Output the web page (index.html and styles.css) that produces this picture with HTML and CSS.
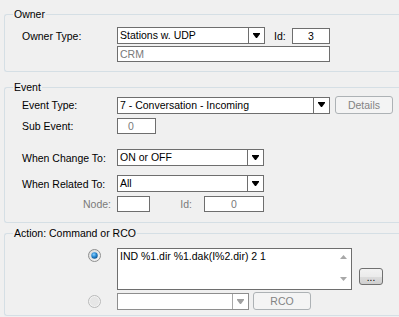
FILE: index.html
```html
<!DOCTYPE html>
<html>
<head>
<meta charset="utf-8">
<link rel="stylesheet" href="styles.css">
</head>
<body>
<fieldset class="group owner">
  <legend>Owner</legend>
  <div class="row owner-r1">
    <span class="lbl">Owner Type:</span>
    <div class="combo w148"><span class="val">Stations w. UDP</span><span class="arrow"><svg width="7" height="6" viewBox="0 0 7 6"><polygon points="0,0 7,0 7,1 4,5 3,5 0,1" fill="#000"/></svg></span></div>
    <span class="idlbl">Id:</span>
    <div class="edit w38 center">3</div>
  </div>
  <div class="row owner-r2">
    <span class="lbl"></span>
    <div class="edit w213 gray">CRM</div>
  </div>
</fieldset>

<fieldset class="group event">
  <legend>Event</legend>
  <div class="row ev-r1">
    <span class="lbl">Event Type:</span>
    <div class="combo w213"><span class="val">7 - Conversation - Incoming</span><span class="arrow"><svg width="7" height="6" viewBox="0 0 7 6"><polygon points="0,0 7,0 7,1 4,5 3,5 0,1" fill="#000"/></svg></span></div>
    <div class="btn dis details">Details</div>
  </div>
  <div class="row ev-r2">
    <span class="lbl">Sub Event:</span>
    <div class="edit w39 gray sub">0</div>
  </div>
  <div class="row ev-r3">
    <span class="lbl">When Change To:</span>
    <div class="combo w147"><span class="val">ON or OFF</span><span class="arrow"><svg width="7" height="6" viewBox="0 0 7 6"><polygon points="0,0 7,0 7,1 4,5 3,5 0,1" fill="#000"/></svg></span></div>
  </div>
  <div class="row ev-r4">
    <span class="lbl">When Related To:</span>
    <div class="combo w147"><span class="val">All</span><span class="arrow"><svg width="7" height="6" viewBox="0 0 7 6"><polygon points="0,0 7,0 7,1 4,5 3,5 0,1" fill="#000"/></svg></span></div>
  </div>
  <div class="row ev-r5">
    <span class="lbl right gray">Node:</span>
    <div class="edit w33"></div>
    <span class="idlbl2 gray">Id:</span>
    <div class="edit w60 center gray">0</div>
  </div>
</fieldset>

<fieldset class="group action">
  <legend>Action: Command or RCO</legend>
  <div class="row act-r1">
    <span class="radiocell top">
      <svg width="13" height="13" viewBox="0 0 13 13">
        <defs>
          <radialGradient id="dot" cx="0.4" cy="0.35" r="0.7">
            <stop offset="0" stop-color="#8fd3ff"/>
            <stop offset="0.5" stop-color="#2a8ad4"/>
            <stop offset="1" stop-color="#0d4f8a"/>
          </radialGradient>
          <linearGradient id="ring" x1="0" y1="0" x2="1" y2="1">
            <stop offset="0" stop-color="#d8d8d8"/>
            <stop offset="1" stop-color="#f8f8f8"/>
          </linearGradient>
        </defs>
        <circle cx="6.5" cy="6.5" r="6" fill="url(#ring)" stroke="#8e8f8f" stroke-width="1"/>
        <circle cx="6.5" cy="6.5" r="3.2" fill="url(#dot)"/>
      </svg>
    </span>
    <div class="memo">
      <div class="memotext">IND %1.dir %1.dak(I%2.dir) 2 1</div>
      <div class="vscroll">
        <svg width="7" height="4" viewBox="0 0 7 4"><polygon points="3.5,0 7,4 0,4" fill="#a8a8a8"/></svg>
        <svg width="7" height="4" viewBox="0 0 7 4"><polygon points="0,0 7,0 3.5,4" fill="#a8a8a8"/></svg>
      </div>
    </div>
    <div class="btn dots">...</div>
  </div>
  <div class="row act-r2">
    <span class="radiocell">
      <svg width="13" height="13" viewBox="0 0 13 13">
        <circle cx="6.5" cy="6.5" r="6" fill="#f2f2f2" stroke="#b8b9b9" stroke-width="1"/>
        <circle cx="6.5" cy="6.5" r="4.5" fill="#e6e6e6"/>
      </svg>
    </span>
    <div class="combo w132 discombo"><span class="val"></span><span class="arrow"><svg width="7" height="6" viewBox="0 0 7 6"><polygon points="0,0 7,0 7,1 4,5 3,5 0,1" fill="#a0a0a0"/></svg></span></div>
    <div class="btn dis rco">RCO</div>
  </div>
</fieldset>
</body>
</html>
```
FILE: styles.css
```css
html, body {
  margin: 0;
  padding: 0;
}
body {
  width: 399px;
  height: 317px;
  overflow: hidden;
  background: #f0f0f0;
  font-family: "Liberation Sans", Arial, sans-serif;
  font-size: 10.5px;
  color: #000;
}

.group {
  margin: 0 0 0 4px;
  padding: 0 0 0 8px;
  border: 1px solid #d5dfe5;
  border-right: none;
  border-radius: 3px 0 0 3px;
  min-width: 0;
}
.group legend {
  padding: 0 1px;
  line-height: 13px;
}

.owner { margin-top: 8px; padding-bottom: 9px; }
.event { margin-top: 9px; padding-bottom: 10px; }
.action { margin-top: 4px; padding-bottom: 5px; }

.row {
  display: flex;
  align-items: center;
  margin-left: 9px;
}
.lbl {
  width: 95px;
  flex: none;
  white-space: nowrap;
}
.lbl.right {
  text-align: right;
  width: 89px;
  padding-right: 6px;
}
.gray { color: #7a7a7a; }

.owner-r1 { margin-top: 6px; }
.owner-r2 { margin-top: 2px; }
.ev-r1 { margin-top: 2px; }
.ev-r2 { margin-top: 4px; }
.ev-r3 { margin-top: 15px; }
.ev-r4 { margin-top: 9px; }
.ev-r5 { margin-top: 4px; }
.act-r1 { margin-top: 8px; align-items: flex-start; }
.act-r2 { margin-top: 3px; }

.combo {
  display: flex;
  height: 17px;
  box-sizing: border-box;
  border: 1px solid #6e6e6e;
  background: #fff;
  flex: none;
}
.combo .val {
  flex: 1;
  padding-left: 2px;
  line-height: 15px;
  white-space: nowrap;
  overflow: hidden;
}
.combo .arrow {
  width: 15px;
  border-left: 1px solid #6e6e6e;
  display: flex;
  align-items: center;
  justify-content: center;
}
.discombo { border-color: #8e8e8e; }
.discombo .arrow { border-left-color: #a8a8a8; }

.w148 { width: 148px; }
.w147 { width: 147px; }
.w213 { width: 213px; }
.w132 { width: 132px; }
.w38 { width: 38px; }
.w39 { width: 39px; }
.w33 { width: 33px; }
.w60 { width: 60px; }

.edit {
  height: 16px;
  box-sizing: border-box;
  border: 1px solid #6e6e6e;
  background: #fff;
  line-height: 14px;
  padding-left: 2px;
  flex: none;
  white-space: nowrap;
}
.edit.center { text-align: center; padding-left: 0; }
.edit.sub { padding-left: 10px; }

.idlbl {
  width: 18px;
  padding-left: 9px;
  flex: none;
}
.idlbl2 {
  width: 42px;
  padding-right: 12px;
  text-align: right;
  flex: none;
}

.btn {
  box-sizing: border-box;
  border: 1px solid #707070;
  border-radius: 3px;
  background: linear-gradient(#f2f2f2 0%, #ebebeb 50%, #dddddd 51%, #cfcfcf 100%);
  text-align: center;
  flex: none;
}
.btn.dis {
  border-color: #adb2b5;
  background: #f4f4f4;
  color: #838383;
}
.details {
  width: 58px;
  height: 18px;
  line-height: 16px;
  margin-left: 5px;
}
.rco {
  width: 58px;
  height: 18px;
  line-height: 16px;
  margin-left: 4px;
  margin-top: -1px;
}
.dots {
  width: 24px;
  height: 17px;
  line-height: 17px;
  margin-left: 7px;
  margin-top: 20px;
  font-size: 10px;
}

.radiocell {
  width: 95px;
  flex: none;
  display: flex;
  padding-left: 66px;
  box-sizing: border-box;
}
.radiocell.top { padding-top: 1px; }

.memo {
  width: 235px;
  height: 42px;
  box-sizing: border-box;
  border: 1px solid #6e6e6e;
  background: #fff;
  display: flex;
  flex: none;
}
.memotext {
  flex: 1;
  padding: 1px 2px;
  line-height: 13px;
  white-space: nowrap;
}
.vscroll {
  width: 16px;
  display: flex;
  flex-direction: column;
  align-items: center;
  justify-content: space-between;
  padding: 6px 0 8px;
  box-sizing: border-box;
}
```
